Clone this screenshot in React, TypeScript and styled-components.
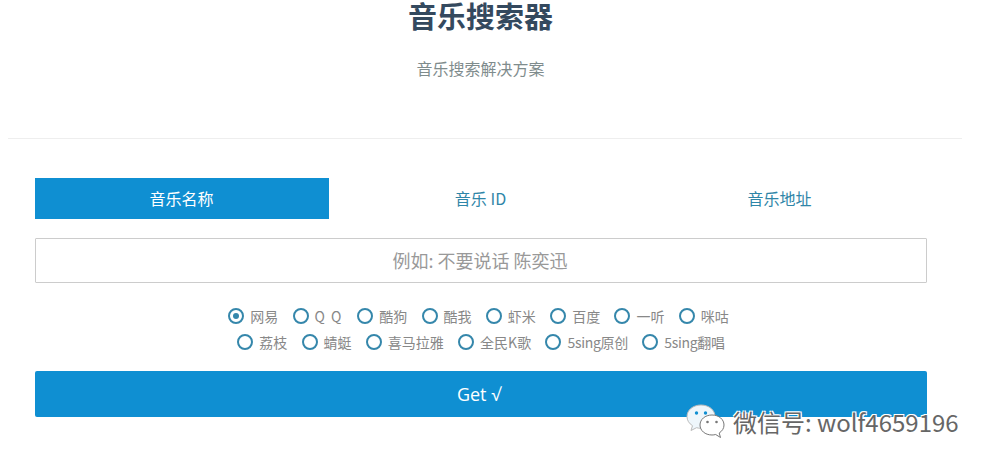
import React from "react";
import styled, { createGlobalStyle } from "styled-components";

const Global = createGlobalStyle`
  html, body { margin: 0; padding: 0; background: #fff; }
  body { font-family: "Noto Sans CJK SC", "Liberation Sans", sans-serif; }
`;

const Page = styled.div`
  position: relative;
  width: 988px;
  height: 466px;
  overflow: hidden;
  padding-left: 8px;
  box-sizing: border-box;
`;

const Main = styled.div`
  width: 954px;
`;

const Hero = styled.header`
  height: 138px;
  padding: 0 36px 0 27px;
  border-bottom: 1px solid #eeeeee;
  text-align: center;
`;

const Title = styled.h1`
  margin: 0;
  height: 32px;
  font-size: 29px;
  line-height: 30px;
  font-weight: 700;
  color: #34495e;
`;

const Subtitle = styled.p`
  margin: 24px 0 0;
  font-size: 16px;
  line-height: 24px;
  color: #7f8c8d;
`;

const Form = styled.section`
  padding: 39px 35px 0 27px;
`;

const Tabs = styled.div`
  display: grid;
  grid-template-columns: repeat(3, 1fr);
  gap: 5px;
`;

const Tab = styled.button<{ $active?: boolean }>`
  height: 41px;
  border: 0;
  padding: 0 1px 2px 0;
  font: inherit;
  font-size: 16px;
  color: ${(p) => (p.$active ? "#ffffff" : "#2f86a8")};
  background: ${(p) => (p.$active ? "#0f8fd2" : "transparent")};
`;

const SearchInput = styled.input`
  display: block;
  box-sizing: border-box;
  width: 100%;
  height: 45px;
  margin-top: 19px;
  padding: 0 3px 2px 1px;
  border: 1px solid #cccccc;
  border-radius: 1px;
  font: inherit;
  font-size: 18px;
  text-align: center;
  outline: none;
  &::placeholder { color: #999999; opacity: 1; }
`;

const Options = styled.div`
  margin-top: 20px;
`;

const OptionRow = styled.div<{ $inset: number }>`
  display: flex;
  justify-content: center;
  column-gap: 14.300px;
  padding-right: ${(p) => p.$inset}px;
`;

const Option = styled.label`
  display: flex;
  align-items: center;
  gap: 6px;
  height: 26px;
  font-size: 14px;
  color: #888888;
  white-space: nowrap;
`;

const OptionText = styled.span<{ $tracking: number }>`
  letter-spacing: ${(p) => p.$tracking}px;
`;

const Radio = styled.span<{ $checked?: boolean }>`
  display: flex;
  align-items: center;
  justify-content: center;
  box-sizing: border-box;
  width: 16px;
  height: 16px;
  border: 2.500px solid #3587ab;
  border-radius: 50%;
  &::after {
    content: "";
    width: 6px;
    height: 6px;
    border-radius: 50%;
    background: ${(p) => (p.$checked ? "#3587ab" : "transparent")};
  }
`;

const Submit = styled.button`
  display: block;
  width: 100%;
  height: 46px;
  margin-top: 16px;
  padding: 0 4px 0 0;
  border: 0;
  border-radius: 2px;
  background: #0f8fd2;
  color: #ffffff;
  font-family: "Open Sans", "DejaVu Sans", sans-serif;
  font-size: 18px;
`;

const Watermark = styled.div`
  position: absolute;
  left: 686px;
  top: 404px;
  display: flex;
  align-items: center;
  gap: 7px;
  color: #666666;
  font-size: 24px;
  line-height: 36px;
  white-space: nowrap;
  text-shadow: 1px 1px 0 #fff, -1px -1px 0 #fff, 1px -1px 0 #fff, -1px 1px 0 #fff;
`;

const WeChat = () => (
  <svg width="40" height="36" viewBox="0 0 40 36" aria-hidden="true">
    <path d="M15 1C7 1 1 6 1 12.5c0 3.8 2 7 5.500 9.200L5 26.500l5.500-2.800c1.500.4 3 .6 4.500.6 8 0 14-5.300 14-11.800S23 1 15 1Z" fill="#eef6fb" stroke="#bbb" strokeWidth="1" />
    <circle cx="10.500" cy="9" r="1.700" fill="#0f8fd2" />
    <circle cx="19.500" cy="9" r="1.700" fill="#0f8fd2" />
    <path d="M26 11c-7 0-12 4.500-12 10s5 10 12 10c1.300 0 2.500-.2 3.700-.5l4.800 3-1.300-4.500c3-1.900 4.800-4.700 4.800-8 0-5.500-5-10-12-10Z" fill="#fff" stroke="#777" strokeWidth="1" />
    <circle cx="21.500" cy="18" r="1.300" fill="#777" />
    <circle cx="30.500" cy="18" r="1.300" fill="#777" />
  </svg>
);

const rows = [
  {
    inset: 5,
    items: [
      { name: "网易", tracking: 0, checked: true },
      { name: "Q Q", tracking: 1.5 },
      { name: "酷狗", tracking: 0 },
      { name: "酷我", tracking: 0 },
      { name: "虾米", tracking: 0 },
      { name: "百度", tracking: 0 },
      { name: "一听", tracking: 0 },
      { name: "咪咕", tracking: 0 },
    ],
  },
  {
    inset: 0,
    items: [
      { name: "荔枝", tracking: 0 },
      { name: "蜻蜓", tracking: 0 },
      { name: "喜马拉雅", tracking: 0 },
      { name: "全民K歌", tracking: 0 },
      { name: "5sing原创", tracking: -0.3 },
      { name: "5sing翻唱", tracking: -0.3 },
    ],
  },
];

export default function App() {
  return (
    <Page>
      <Global />
      <Main>
        <Hero>
          <Title>音乐搜索器</Title>
          <Subtitle>音乐搜索解决方案</Subtitle>
        </Hero>
        <Form>
          <Tabs>
            <Tab $active>音乐名称</Tab>
            <Tab>音乐 ID</Tab>
            <Tab>音乐地址</Tab>
          </Tabs>
          <SearchInput placeholder="例如: 不要说话 陈奕迅" />
          <Options>
            {rows.map((row) => (
              <OptionRow key={row.items[0].name} $inset={row.inset}>
                {row.items.map((s) => (
                  <Option key={s.name}>
                    <Radio $checked={"checked" in s} />
                    <OptionText $tracking={s.tracking}>{s.name}</OptionText>
                  </Option>
                ))}
              </OptionRow>
            ))}
          </Options>
          <Submit>Get √</Submit>
        </Form>
      </Main>
      <Watermark>
        <WeChat />
        微信号: wolf4659196
      </Watermark>
    </Page>
  );
}
